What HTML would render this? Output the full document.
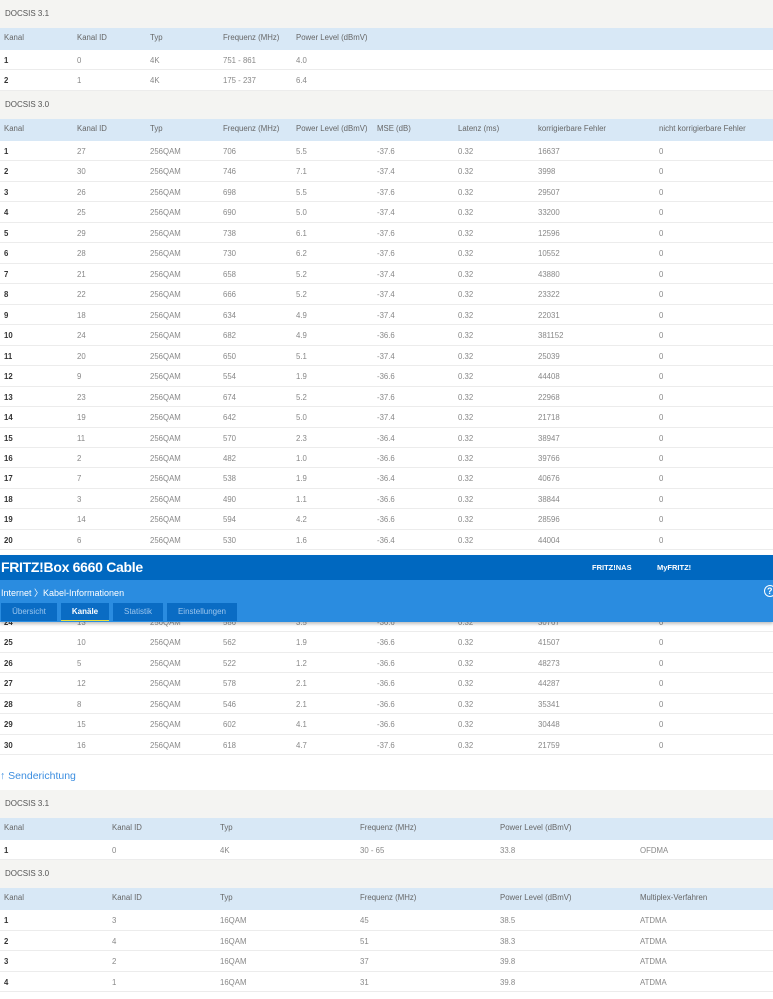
<!DOCTYPE html>
<html><head><meta charset="utf-8"><style>
*{margin:0;padding:0;box-sizing:border-box}
body{width:773px;height:999px;overflow:hidden;background:#fff;font-family:"Liberation Sans",sans-serif;font-size:7.8px;color:#555;position:relative}
.sec{height:28px;background:#f4f4f2;line-height:28px;padding-left:5px;color:#555;font-size:8px}
.hd{height:22px;background:#d8e8f6;position:relative;color:#666}
.r{height:20.47px;position:relative;border-bottom:1px solid #ececec;color:#888}
.hd span,.r span{position:absolute;top:0;line-height:21px;white-space:nowrap}
.hd span{line-height:20px}
.r span:first-child{color:#333;font-weight:bold}
.d span:nth-child(1){left:4px}.d span:nth-child(2){left:77px}.d span:nth-child(3){left:150px}.d span:nth-child(4){left:223px}.d span:nth-child(5){left:296px}.d span:nth-child(6){left:377px}.d span:nth-child(7){left:458px}.d span:nth-child(8){left:538px}.d span:nth-child(9){left:659px}
.u span:nth-child(1){left:4px}.u span:nth-child(2){left:112px}.u span:nth-child(3){left:220px}.u span:nth-child(4){left:360px}.u span:nth-child(5){left:500px}.u span:nth-child(6){left:640px}
#bar{position:absolute;left:0;top:555px;width:773px;height:67px;background:#2a8ce0;box-shadow:0 2px 3px rgba(0,0,0,.25)}
#top{height:25px;background:#0068c0;position:relative}
#top b{position:absolute;left:1px;top:4px;font-size:14px;color:#fff;letter-spacing:-0.3px}
#top i{position:absolute;top:8px;font-style:normal;color:#fff;font-size:7.5px;font-weight:bold}
#crumb{position:absolute;left:1px;top:31px;color:#fff;font-size:9px}
.tab{position:absolute;top:48px;height:18px;background:#0a6cc4;color:#9cc6ee;font-size:8px;line-height:18px;text-align:center}
</style></head><body>
<div class="sec">DOCSIS 3.1</div>
<div class="hd d"><span>Kanal</span><span>Kanal ID</span><span>Typ</span><span>Frequenz (MHz)</span><span>Power Level (dBmV)</span></div>
<div class="r d"><span>1</span><span>0</span><span>4K</span><span>751 - 861</span><span>4.0</span></div>
<div class="r d"><span>2</span><span>1</span><span>4K</span><span>175 - 237</span><span>6.4</span></div>
<div class="sec">DOCSIS 3.0</div>
<div class="hd d"><span>Kanal</span><span>Kanal ID</span><span>Typ</span><span>Frequenz (MHz)</span><span>Power Level (dBmV)</span><span>MSE (dB)</span><span>Latenz (ms)</span><span>korrigierbare Fehler</span><span>nicht korrigierbare Fehler</span></div>
<div class="r d"><span>1</span><span>27</span><span>256QAM</span><span>706</span><span>5.5</span><span>-37.6</span><span>0.32</span><span>16637</span><span>0</span></div>
<div class="r d"><span>2</span><span>30</span><span>256QAM</span><span>746</span><span>7.1</span><span>-37.4</span><span>0.32</span><span>3998</span><span>0</span></div>
<div class="r d"><span>3</span><span>26</span><span>256QAM</span><span>698</span><span>5.5</span><span>-37.6</span><span>0.32</span><span>29507</span><span>0</span></div>
<div class="r d"><span>4</span><span>25</span><span>256QAM</span><span>690</span><span>5.0</span><span>-37.4</span><span>0.32</span><span>33200</span><span>0</span></div>
<div class="r d"><span>5</span><span>29</span><span>256QAM</span><span>738</span><span>6.1</span><span>-37.6</span><span>0.32</span><span>12596</span><span>0</span></div>
<div class="r d"><span>6</span><span>28</span><span>256QAM</span><span>730</span><span>6.2</span><span>-37.6</span><span>0.32</span><span>10552</span><span>0</span></div>
<div class="r d"><span>7</span><span>21</span><span>256QAM</span><span>658</span><span>5.2</span><span>-37.4</span><span>0.32</span><span>43880</span><span>0</span></div>
<div class="r d"><span>8</span><span>22</span><span>256QAM</span><span>666</span><span>5.2</span><span>-37.4</span><span>0.32</span><span>23322</span><span>0</span></div>
<div class="r d"><span>9</span><span>18</span><span>256QAM</span><span>634</span><span>4.9</span><span>-37.4</span><span>0.32</span><span>22031</span><span>0</span></div>
<div class="r d"><span>10</span><span>24</span><span>256QAM</span><span>682</span><span>4.9</span><span>-36.6</span><span>0.32</span><span>381152</span><span>0</span></div>
<div class="r d"><span>11</span><span>20</span><span>256QAM</span><span>650</span><span>5.1</span><span>-37.4</span><span>0.32</span><span>25039</span><span>0</span></div>
<div class="r d"><span>12</span><span>9</span><span>256QAM</span><span>554</span><span>1.9</span><span>-36.6</span><span>0.32</span><span>44408</span><span>0</span></div>
<div class="r d"><span>13</span><span>23</span><span>256QAM</span><span>674</span><span>5.2</span><span>-37.6</span><span>0.32</span><span>22968</span><span>0</span></div>
<div class="r d"><span>14</span><span>19</span><span>256QAM</span><span>642</span><span>5.0</span><span>-37.4</span><span>0.32</span><span>21718</span><span>0</span></div>
<div class="r d"><span>15</span><span>11</span><span>256QAM</span><span>570</span><span>2.3</span><span>-36.4</span><span>0.32</span><span>38947</span><span>0</span></div>
<div class="r d"><span>16</span><span>2</span><span>256QAM</span><span>482</span><span>1.0</span><span>-36.6</span><span>0.32</span><span>39766</span><span>0</span></div>
<div class="r d"><span>17</span><span>7</span><span>256QAM</span><span>538</span><span>1.9</span><span>-36.4</span><span>0.32</span><span>40676</span><span>0</span></div>
<div class="r d"><span>18</span><span>3</span><span>256QAM</span><span>490</span><span>1.1</span><span>-36.6</span><span>0.32</span><span>38844</span><span>0</span></div>
<div class="r d"><span>19</span><span>14</span><span>256QAM</span><span>594</span><span>4.2</span><span>-36.6</span><span>0.32</span><span>28596</span><span>0</span></div>
<div class="r d"><span>20</span><span>6</span><span>256QAM</span><span>530</span><span>1.6</span><span>-36.4</span><span>0.32</span><span>44004</span><span>0</span></div>
<div class="r d"><span>21</span><span>4</span><span>256QAM</span><span>514</span><span>1.4</span><span>-36.6</span><span>0.32</span><span>40112</span><span>0</span></div>
<div class="r d"><span>22</span><span>17</span><span>256QAM</span><span>626</span><span>4.5</span><span>-37.4</span><span>0.32</span><span>25310</span><span>0</span></div>
<div class="r d"><span>23</span><span>1</span><span>256QAM</span><span>474</span><span>0.9</span><span>-36.4</span><span>0.32</span><span>39840</span><span>0</span></div>
<div class="r d"><span>24</span><span>13</span><span>256QAM</span><span>586</span><span>3.5</span><span>-36.6</span><span>0.32</span><span>30767</span><span>0</span></div>
<div class="r d"><span>25</span><span>10</span><span>256QAM</span><span>562</span><span>1.9</span><span>-36.6</span><span>0.32</span><span>41507</span><span>0</span></div>
<div class="r d"><span>26</span><span>5</span><span>256QAM</span><span>522</span><span>1.2</span><span>-36.6</span><span>0.32</span><span>48273</span><span>0</span></div>
<div class="r d"><span>27</span><span>12</span><span>256QAM</span><span>578</span><span>2.1</span><span>-36.6</span><span>0.32</span><span>44287</span><span>0</span></div>
<div class="r d"><span>28</span><span>8</span><span>256QAM</span><span>546</span><span>2.1</span><span>-36.6</span><span>0.32</span><span>35341</span><span>0</span></div>
<div class="r d"><span>29</span><span>15</span><span>256QAM</span><span>602</span><span>4.1</span><span>-36.6</span><span>0.32</span><span>30448</span><span>0</span></div>
<div class="r d"><span>30</span><span>16</span><span>256QAM</span><span>618</span><span>4.7</span><span>-37.6</span><span>0.32</span><span>21759</span><span>0</span></div>
<div style="height:35px;line-height:42px;color:#3c8ee0;font-size:10.5px">↑ Senderichtung</div>
<div class="sec">DOCSIS 3.1</div>
<div class="hd u"><span>Kanal</span><span>Kanal ID</span><span>Typ</span><span>Frequenz (MHz)</span><span>Power Level (dBmV)</span></div>
<div class="r u"><span>1</span><span>0</span><span>4K</span><span>30 - 65</span><span>33.8</span><span>OFDMA</span></div>
<div class="sec">DOCSIS 3.0</div>
<div class="hd u"><span>Kanal</span><span>Kanal ID</span><span>Typ</span><span>Frequenz (MHz)</span><span>Power Level (dBmV)</span><span>Multiplex-Verfahren</span></div>
<div class="r u"><span>1</span><span>3</span><span>16QAM</span><span>45</span><span>38.5</span><span>ATDMA</span></div>
<div class="r u"><span>2</span><span>4</span><span>16QAM</span><span>51</span><span>38.3</span><span>ATDMA</span></div>
<div class="r u"><span>3</span><span>2</span><span>16QAM</span><span>37</span><span>39.8</span><span>ATDMA</span></div>
<div class="r u"><span>4</span><span>1</span><span>16QAM</span><span>31</span><span>39.8</span><span>ATDMA</span></div>

<div id="bar">
<div id="top"><b>FRITZ!Box 6660 Cable</b><i style="left:592px">FRITZ!NAS</i><i style="left:657px">MyFRITZ!</i></div>
<div id="crumb">Internet 〉Kabel-Informationen</div>
<div style="position:absolute;left:764px;top:30px;width:12px;height:12px;border:1.5px solid #fff;border-radius:50%;color:#fff;font-size:9px;font-weight:bold;line-height:10px;padding-left:2px">?</div>
<div class="tab" style="left:1px;width:56px">Übersicht</div>
<div class="tab" style="left:61px;width:48px;color:#fff;font-weight:bold;border-bottom:1.5px solid #e8e040">Kanäle</div>
<div class="tab" style="left:113px;width:50px">Statistik</div>
<div class="tab" style="left:167px;width:70px">Einstellungen</div>
</div>
</body></html>
